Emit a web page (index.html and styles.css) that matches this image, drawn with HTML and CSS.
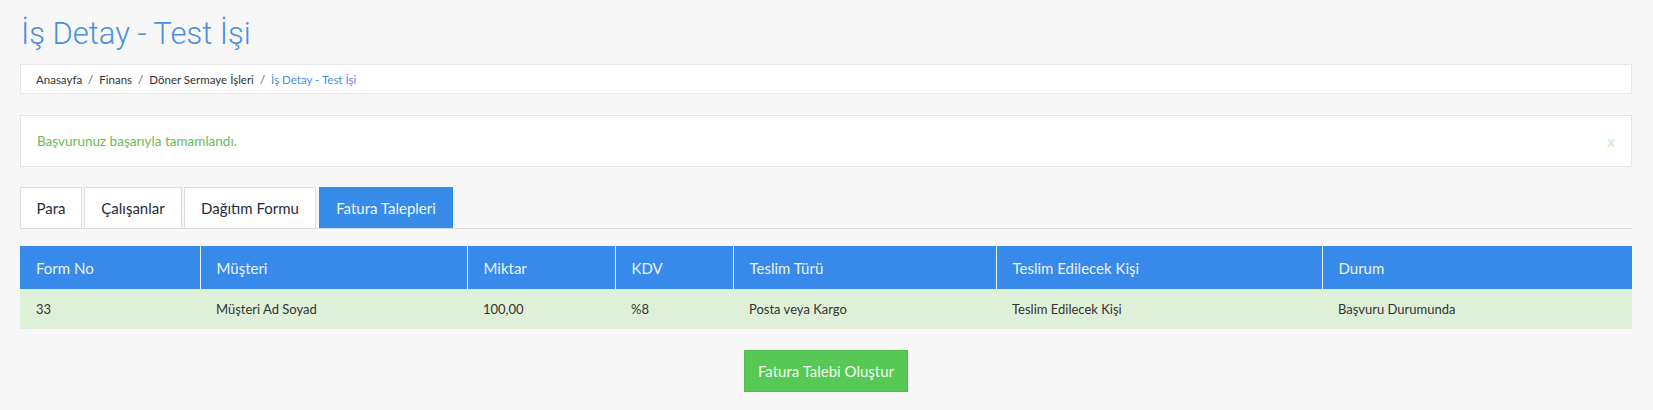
FILE: index.html
```html
<!DOCTYPE html>
<html lang="tr">
<head>
<meta charset="utf-8">
<title>İş Detay - Test İşi</title>
<link rel="stylesheet" href="styles.css">
</head>
<body>
<div class="page">
  <h1 class="title">İş Detay - Test İşi</h1>
  <nav class="breadcrumb">
    <span class="crumb">Anasayfa</span><span class="sep">/</span>
    <span class="crumb">Finans</span><span class="sep">/</span>
    <span class="crumb">Döner Sermaye İşleri</span><span class="sep">/</span>
    <span class="crumb active">İş Detay - Test İşi</span>
  </nav>
  <div class="alert">
    <span class="alert-text">Başvurunuz başarıyla tamamlandı.</span>
    <span class="alert-close">x</span>
  </div>
  <ul class="tabs">
    <li class="tab t-para">Para</li>
    <li class="tab t-cal">Çalışanlar</li>
    <li class="tab t-dag">Dağıtım Formu</li>
    <li class="tab t-fat active">Fatura Talepleri</li>
  </ul>
  <table class="grid">
    <colgroup>
      <col class="c1"><col class="c2"><col class="c3"><col class="c4"><col class="c5"><col class="c6"><col class="c7">
    </colgroup>
    <thead>
      <tr>
        <th>Form No</th><th>Müşteri</th><th>Miktar</th><th>KDV</th><th>Teslim Türü</th><th>Teslim Edilecek Kişi</th><th>Durum</th>
      </tr>
    </thead>
    <tbody>
      <tr>
        <td>33</td><td>Müşteri Ad Soyad</td><td>100,00</td><td>%8</td><td>Posta veya Kargo</td><td>Teslim Edilecek Kişi</td><td>Başvuru Durumunda</td>
      </tr>
    </tbody>
  </table>
  <div class="actions">
    <button class="btn-success" type="button">Fatura Talebi Oluştur</button>
  </div>
</div>
</body>
</html>
```
FILE: styles.css
```css
* { box-sizing: border-box; }
html, body { margin: 0; padding: 0; }
body {
  background: #f7f7f7;
  font-family: Lato, "Liberation Sans", sans-serif;
  color: #333;
}
.page {
  padding: 16px 21px 0 20px;
}
.title {
  margin: 0;
  font-family: Roboto, "Liberation Sans", sans-serif;
  font-weight: 300;
  font-size: 31px;
  line-height: 36px;
  color: #4a8fe0;
  padding-left: 1px;
}
.breadcrumb {
  margin-top: 12px;
  height: 30px;
  background: #fff;
  border: 1px solid #e6e6e6;
  display: flex;
  align-items: center;
  padding: 0 15px;
  font-size: 11.5px;
  color: #333;
}
.sep { padding: 0 6px; color: #555; }
.crumb.active { color: #4a8fe0; }
.alert {
  margin-top: 21px;
  height: 52px;
  background: #fff;
  border: 1px solid #e3e3e3;
  display: flex;
  align-items: center;
  justify-content: space-between;
  padding: 0 15px 0 16px;
}
.alert-text {
  font-size: 13.5px;
  color: #67bc58;
}
.alert-close {
  font-size: 15px;
  font-weight: 700;
  color: #d4eed0;
  font-family: "Liberation Sans", sans-serif;
  padding-right: 1px;
}
.tabs {
  list-style: none;
  margin: 20px 0 0 0;
  padding: 0;
  display: flex;
  gap: 2px;
  border-bottom: 1px solid #dcdcdc;
}
.tab {
  height: 41px;
  display: flex;
  align-items: center;
  justify-content: center;
  background: #fff;
  border: 1px solid #dedede;
  border-bottom: none;
  font-size: 15px;
  color: #1f2d3d;
}
.t-para { width: 62px; }
.t-cal { width: 98px; }
.t-dag { width: 132px; }
.t-fat { width: 134px; }
.tab.active {
  background: #378be9;
  border-color: #378be9;
  color: #eef5fd;
  margin-left: 1px;
}
.grid {
  margin-top: 17px;
  width: 100%;
  border-collapse: collapse;
  table-layout: fixed;
}
.c1 { width: 180px; }
.c2 { width: 267px; }
.c3 { width: 148px; }
.c4 { width: 118px; }
.c5 { width: 263px; }
.c6 { width: 326px; }
.c7 { width: 310px; }
.grid th {
  background: #378ae9;
  color: #eaf3fd;
  font-weight: 400;
  font-size: 15px;
  text-align: left;
  height: 43px;
  padding: 0 16px;
  border-left: 1px solid #e6f0fc;
}
.grid th:first-child { border-left: none; }
.grid td {
  background: #dff0d8;
  font-size: 13px;
  color: #333;
  height: 40px;
  padding: 0 16px;
}
.actions {
  margin-top: 21px;
  display: flex;
  justify-content: center;
}
.btn-success {
  width: 164px;
  height: 42px;
  background: #55c954;
  border: 1px solid #4cbf4b;
  color: #f2fbf1;
  font-family: Lato, "Liberation Sans", sans-serif;
  font-size: 15px;
  padding: 0;
  cursor: pointer;
}
```
